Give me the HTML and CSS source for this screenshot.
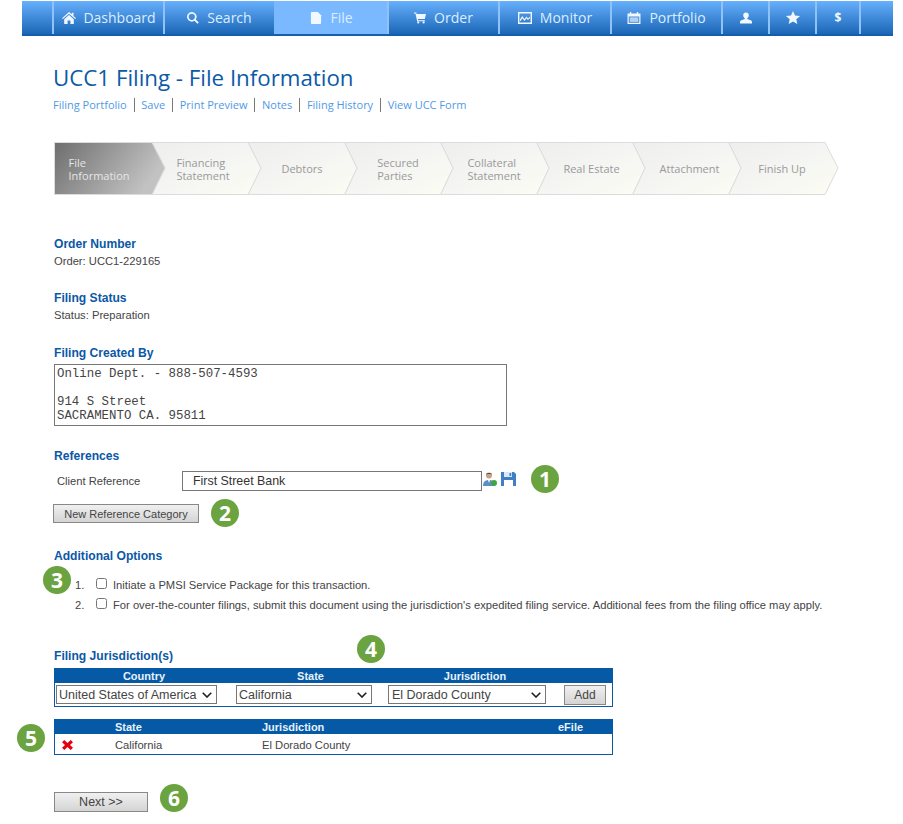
FILE: index.html
```html
<!DOCTYPE html>
<html lang="en">
<head>
<meta charset="utf-8">
<title>UCC1 Filing - File Information</title>
<link rel="stylesheet" href="styles.css">
</head>
<body>
<nav class="nav">
  <a class="nav-item w111 first"><svg class="ico ico-home" viewBox="0 0 14 12"><path d="M7 0 0 6.200l.8.9L7 1.700l6.200 5.400.8-.9-2.500-2.200V.8H9.800v1.500zM2.200 7.200V12h3.400V8.400h2.800V12h3.400V7.200L7 3z"/></svg>Dashboard</a>
  <a class="nav-item w111"><svg class="ico" viewBox="0 0 12 12"><path d="M4.800 0a4.800 4.800 0 1 0 2.700 8.800l3 3 1.300-1.300-3-3A4.800 4.800 0 0 0 4.800 0zm0 1.700a3.100 3.100 0 1 1 0 6.200 3.100 3.100 0 0 1 0-6.200z"/></svg>Search</a>
  <a class="nav-item w113 active"><svg class="ico" viewBox="0 0 11 13"><path d="M0 1a1 1 0 0 1 1-1h6.500L11 3.500V12a1 1 0 0 1-1 1H1a1 1 0 0 1-1-1z"/></svg>File</a>
  <a class="nav-item w111"><svg class="ico" viewBox="0 0 13 12"><path d="M0 0h2.400l.4 1.600H13l-1.300 5.600H4.200l.3 1.200h7.300v1.100H3.400L1.600 1.100H0z"/><circle cx="4.600" cy="10.800" r="1.200"/><circle cx="10.400" cy="10.800" r="1.200"/></svg>Order</a>
  <a class="nav-item w112"><svg class="ico ico-wide" viewBox="0 0 14 12"><path fill-rule="evenodd" d="M0 0h14v12H0zm1.400 1.400v9.200h11.200V1.400z"/><path d="M2 7.600 4.200 4l2.300 3 2-2.600 1.500 2 2-1.600v1.500l-2.200 1.700L8.500 6.300 6.500 9 4.300 6.200 2.600 9H2z"/></svg>Monitor</a>
  <a class="nav-item w111"><svg class="ico ico-wide" viewBox="0 0 14 13"><path fill-rule="evenodd" d="M0 1.500h2.500V0h1.500v1.500h6V0h1.500v1.500H14V13H0zM1.300 4.800V11.700h11.400V4.800z"/><path d="M2.300 5.800h9.400v5H2.300z" opacity=".65"/></svg>Portfolio</a>
  <a class="nav-item w47"><svg class="ico" viewBox="0 0 13 12"><path d="M6.500 0a3 3 0 0 1 3 3c0 1.400-.7 2.700-1.700 3.200v.8l3.700 1.500c1 .4 1.500 1 1.500 2V12H0v-1.500c0-1 .5-1.600 1.500-2L5.200 7v-.8C4.200 5.700 3.500 4.400 3.500 3a3 3 0 0 1 3-3z"/></svg></a>
  <a class="nav-item w47"><svg class="ico ico-star" viewBox="0 0 14 13"><path d="M7 0l2 4.500 5 .5-3.700 3.300L11.300 13 7 10.500 2.700 13l1-4.700L0 5l5-.5z"/></svg></a>
  <a class="nav-item w46 dollar">$</a>
</nav>

<main class="page">
  <h1 class="title">UCC1 Filing - File Information</h1>
  <div class="links">
    <a>Filing Portfolio</a><a>Save</a><a>Print Preview</a><a>Notes</a><a>Filing History</a><a>View UCC Form</a>
  </div>

  <div class="stepper">
    <svg class="stepper-bg" viewBox="0 0 786 54" aria-hidden="true">
      <defs>
        <linearGradient id="on" x1="0" y1="0" x2="1" y2="0.35"><stop offset="0" stop-color="#6e6e6e"/><stop offset="1" stop-color="#c2c2c2"/></linearGradient>
        <linearGradient id="off" x1="0" y1="0" x2="1" y2="1"><stop offset="0" stop-color="#eeeeee"/><stop offset=".6" stop-color="#f6f6f3"/><stop offset="1" stop-color="#fdfdf4"/></linearGradient>
      </defs>
      <g fill="url(#off)" stroke="#dcdcdc">
        <path d="M771 .5 784 26 771 52.500H674.500L687 26 674.500 .5z"/>
        <path d="M674.500 .5 687 26 674.500 52.500H578.500L591 26 578.500 .5z"/>
        <path d="M578.500 .5 591 26 578.500 52.500H482.500L495 26 482.500 .5z"/>
        <path d="M482.500 .5 495 26 482.500 52.500H386.500L399 26 386.500 .5z"/>
        <path d="M386.500 .5 399 26 386.500 52.500H290.500L303 26 290.500 .5z"/>
        <path d="M290.500 .5 303 26 290.500 52.500H194L207 26 194 .5z"/>
        <path d="M194 .5 207 26 194 52.500H98L111 26 98 .5z"/>
        <path fill="url(#on)" d="M.5 .5H98L111 26 98 52.500H.5z"/>
      </g>
    </svg>
    <div class="step step-on"><span>File<br>Information</span></div>
    <div class="step"><span>Financing<br>Statement</span></div>
    <div class="step"><span>Debtors</span></div>
    <div class="step"><span>Secured<br>Parties</span></div>
    <div class="step"><span>Collateral<br>Statement</span></div>
    <div class="step"><span>Real Estate</span></div>
    <div class="step"><span>Attachment</span></div>
    <div class="step"><span>Finish Up</span></div>
  </div>

  <section class="sec sec-order">
    <h2>Order Number</h2>
    <p>Order: UCC1-229165</p>
  </section>
  <section class="sec sec-status">
    <h2>Filing Status</h2>
    <p>Status: Preparation</p>
  </section>
  <section class="sec sec-created">
    <h2>Filing Created By</h2>
    <textarea class="address" readonly>Online Dept. - 888-507-4593

914 S Street
SACRAMENTO CA. 95811</textarea>
  </section>

  <section class="sec sec-refs">
    <h2>References</h2>
    <div class="ref-row">
      <label class="ref-label">Client Reference</label>
      <input class="ref-input" type="text" value="First Street Bank">
      <svg class="ref-ico" viewBox="0 0 14 14"><circle cx="6" cy="3.500" r="3" fill="#c9a184"/><path d="M3 2.500C3 .5 9 .5 9 2.500 8 1.800 4 1.800 3 2.500z" fill="#5c4a3c"/><path d="M0 14c0-4 2-6 6-6s6 2 6 6z" fill="#5a8fc4"/><path d="M5 8h2l-1 3z" fill="#fff"/><circle cx="11" cy="11" r="3" fill="#3fa648"/></svg>
      <svg class="ref-ico save-ico" viewBox="0 0 15 14"><path d="M0 0h13l2 2v12H0z" fill="#3f7fc4"/><path d="M3 0h8v5H3z" fill="#dbe9f7"/><path d="M8.500 1h1.700v3H8.500z" fill="#3f7fc4"/><path d="M3 8h9v6H3z" fill="#fff"/></svg>
    </div>
    <button class="btn btn-ref" type="button">New Reference Category</button>
  </section>

  <section class="sec sec-options">
    <h2>Additional Options</h2>
    <ol class="options">
      <li><input type="checkbox"><span>Initiate a PMSI Service Package for this transaction.</span></li>
      <li><input type="checkbox"><span>For over-the-counter filings, submit this document using the jurisdiction's expedited filing service. Additional fees from the filing office may apply.</span></li>
    </ol>
  </section>

  <section class="sec sec-juris">
    <h2>Filing Jurisdiction(s)</h2>
    <div class="panel panel-add">
      <div class="thead">
        <span>Country</span><span>State</span><span>Jurisdiction</span><span></span>
      </div>
      <div class="trow">
        <select class="sel sel-country"><option>United States of America</option></select>
        <select class="sel sel-state"><option>California</option></select>
        <select class="sel sel-juris"><option>El Dorado County</option></select>
        <button class="btn btn-add" type="button">Add</button>
      </div>
    </div>
    <div class="panel panel-list">
      <div class="thead">
        <span></span><span>State</span><span>Jurisdiction</span><span>eFile</span>
      </div>
      <div class="trow">
        <svg class="del" viewBox="0 0 11 10"><path d="M2.300 0 5.500 3 8.700 0 11 2.200 8 5l3 2.800L8.700 10 5.500 7 2.300 10 0 7.800 3 5 0 2.200z"/></svg>
        <span>California</span><span>El Dorado County</span><span></span>
      </div>
    </div>
  </section>

  <button class="btn btn-next" type="button">Next &gt;&gt;</button>

  <span class="badge b1">1</span>
  <span class="badge b2">2</span>
  <span class="badge b3">3</span>
  <span class="badge b4">4</span>
  <span class="badge b5">5</span>
  <span class="badge b6">6</span>
</main>
</body>
</html>
```
FILE: styles.css
```css
* { box-sizing: border-box; }
html, body { margin: 0; padding: 0; }
body {
  background: #fff;
  color: #444;
  font-family: "Liberation Sans", Arial, sans-serif;
  font-size: 11.2px;
  padding-top: 1px;
}

/* top navigation */
.nav {
  display: flex;
  height: 35px;
  margin: 0 10px 0 22px;
  padding: 0 31px 0 30px;
  background: linear-gradient(#66b0fd, #1b66b6);
  border-bottom: 2px solid #135fae;
}
.nav-item {
  display: flex;
  align-items: center;
  justify-content: center;
  gap: 8px;
  height: 33px;
  flex: none;
  border-left: 2px solid #8fc3f7;
  color: #dbeeff;
  font-family: "Open Sans", sans-serif;
  font-size: 14px;
}
.nav-item:last-child { border-right: 2px solid #8fc3f7; }
.nav-item.active { background: #7ab8ff; border-left-color: #7ab8ff; }
.first { gap: 7px; padding-left: 1px; }
.w111 { width: 111px; }
.w112 { width: 112px; }
.w113 { width: 113px; }
.w47 { width: 47px; }
.w46 { width: 46px; }
.ico { width: 12px; height: 12px; fill: #f2f8ff; flex: none; }
.ico-home { width: 14px; }
.ico-wide { width: 14px; }
.ico-star { width: 14px; height: 13px; }
.dollar { font-weight: 700; font-size: 12px; color: #f2f8ff; }

/* page */
.page { position: relative; padding: 24px 0 0 54px; }
.title {
  margin: 0 0 0 -1px;
  color: #0c5aa6;
  font-family: "Open Sans", sans-serif;
  font-size: 22.3px;
  font-weight: 400;
  line-height: 36px;
}
.links {
  display: flex;
  margin: 2px 0 0 -1px;
  color: #4f9ae6;
  font-family: "Open Sans", sans-serif;
  font-size: 11px;
  line-height: 14px;
}
.links a { padding: 0 6.8px; border-left: 1px solid #777; }
.links a:first-child { padding-left: 0; border-left: 0; }

/* stepper */
.stepper {
  position: relative;
  display: grid;
  grid-template-columns: 101px 96px 102px 90px 102px 93px 103px 82px;
  width: 786px;
  height: 54px;
  margin-top: 30px;
  color: #9a9a9a;
  font-family: "Open Sans", sans-serif;
  font-size: 11px;
  line-height: 13px;
}
.stepper-bg { position: absolute; left: 0; top: 0; width: 786px; height: 54px; }
.step { position: relative; display: flex; align-items: center; justify-content: center; padding-bottom: 1px; }
.step-on { padding-right: 11px; color: #e6e6e6; }

/* sections */
.sec h2 {
  margin: 0;
  color: #0a58a6;
  font-size: 12.1px;
  font-weight: 700;
  line-height: 14px;
}
.sec p { margin: 3px 0 0; line-height: 14px; color: #444; }
.sec-order { margin-top: 41px; }
.sec-status { margin-top: 23px; }
.sec-created { margin-top: 24px; }
.address {
  display: block;
  width: 453px;
  height: 62px;
  margin-top: 4px;
  padding: 2px 2px;
  border: 1px solid #777;
  border-radius: 0;
  color: #444;
  font-family: "Liberation Mono", monospace;
  font-size: 12.4px;
  line-height: 14px;
  resize: none;
  overflow: hidden;
  outline: 0;
}
.sec-refs { margin-top: 23px; }
.ref-row { display: flex; align-items: center; height: 20px; margin-top: 8px; }
.ref-label { width: 128px; padding-left: 3px; flex: none; }
.ref-input {
  width: 300px;
  height: 20px;
  padding: 0 10px;
  border: 1px solid #777;
  border-radius: 0;
  color: #333;
  font-family: "Liberation Sans", sans-serif;
  font-size: 12.4px;
}
.ref-ico { width: 14px; height: 14px; margin: 0 0 4px 1px; flex: none; }
.save-ico { width: 15px; margin-left: 4px; }
.btn {
  display: block;
  padding: 0;
  border: 1px solid #888;
  border-radius: 0;
  background: linear-gradient(#f0f0f0, #d4d4d4);
  color: #444;
  font-family: "Liberation Sans", sans-serif;
}
.btn-ref { width: 146px; height: 19px; margin: 13px 0 0 -1px; font-size: 11px; font-weight: 400; }
.sec-options { margin-top: 26px; }
.options { margin: 12px 0 0; padding: 0; list-style: none; counter-reset: opt; color: #444; }
.options li {
  position: relative;
  display: flex;
  align-items: center;
  height: 20px;
  padding-left: 42px;
  counter-increment: opt;
  white-space: nowrap;
}
.options li::before { content: counter(opt) "."; width: 22px; margin-left: -21px; flex: none; }
.options input { width: 11px; height: 11px; margin: 0 6px 3px -1px; flex: none; }
.sec-juris { margin-top: 34px; }
.panel { width: 559px; border: 1px solid #0a58a6; border-top: 0; }
.panel-add { margin-top: 5px; height: 39px; }
.panel-list { margin-top: 12px; height: 36px; }
.thead {
  display: grid;
  height: 15px;
  margin: 0 -1px;
  padding: 0 1px;
  background: #0559a5;
  color: #e8f2fb;
  font-weight: 700;
  font-size: 11px;
  line-height: 16px;
}
.panel-add .thead, .panel-add .trow { grid-template-columns: 178px 155px 174px 50px; }
.panel-add .thead { text-align: center; }
.panel-list .thead, .panel-list .trow { grid-template-columns: 60px 147px 296px 54px; }
.trow { display: grid; align-items: center; }
.panel-add .trow { height: 23px; }
.panel-list .trow { height: 20px; padding-top: 2px; color: #444; }
.sel {
  appearance: none;
  height: 19px;
  padding: 0 0 0 2px;
  border: 1px solid #777;
  border-radius: 0;
  background: #fff url("data:image/svg+xml,%3Csvg xmlns='http://www.w3.org/2000/svg' viewBox='0 0 10 6'%3E%3Cpath d='M.7.7 5 5l4.300-4.300' fill='none' stroke='%23222' stroke-width='1.600'/%3E%3C/svg%3E") no-repeat right 4px center / 10px 6px;
  color: #444;
  font-family: "Liberation Sans", sans-serif;
  font-size: 12.5px;
}
.sel-country { width: 161px; margin-left: 1px; }
.sel-state { width: 136px; margin-left: 3px; }
.sel-juris { width: 158px; margin-left: 0; padding-left: 3px; }
.btn-add { width: 42px; height: 20px; margin-left: 2px; font-size: 12px; }
.del { width: 11px; height: 10px; margin-left: 7px; fill: #e3000f; }
.btn-next { width: 94px; height: 20px; margin-top: 37px; font-size: 12.5px; }

/* numbered callouts */
.badge {
  position: absolute;
  width: 28px;
  height: 28px;
  border-radius: 50%;
  background: #6aa33f;
  color: #fff;
  font-family: "Open Sans", sans-serif;
  font-size: 21px;
  font-weight: 700;
  line-height: 28px;
  text-align: center;
}
.b1 { left: 531px; top: 429px; }
.b2 { left: 211px; top: 463px; }
.b3 { left: 43px; top: 530px; }
.b4 { left: 357px; top: 599px; }
.b5 { left: 17px; top: 688px; }
.b6 { left: 160px; top: 748px; }
```
